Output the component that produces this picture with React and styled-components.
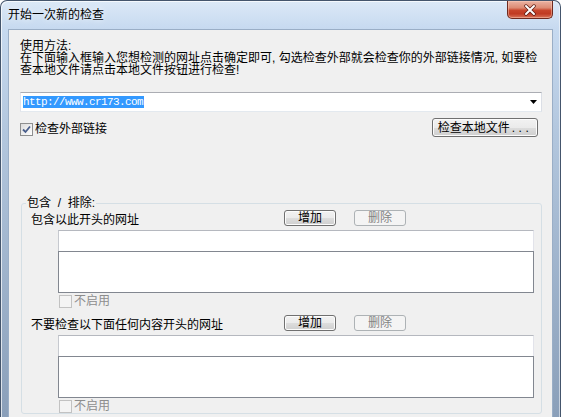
import React from 'react'
import styled, { createGlobalStyle } from 'styled-components';

const GlobalStyle = createGlobalStyle`
  html, body {
    margin: 0;
    padding: 0;
    background: #ffffff;
  }
  body {
    font-family: "Liberation Sans", "Noto Sans CJK SC", sans-serif;
    font-size: 12px;
    color: #000;
  }
`;

const Window = styled.div`
  width: 561px;
  height: 417px;
  box-sizing: border-box;
  border: 1px solid #44556c;
  border-bottom: none;
  border-radius: 7px 7px 0 0;
  background: linear-gradient(#dce9f7 0, #c7daf0 27px, #b3c7de 130px, #8a9fb9 417px);
  box-shadow: inset 1px 1px 0 rgba(255, 255, 255, 0.7), inset -1px 0 0 rgba(255, 255, 255, 0.5);
  padding: 0 7px;
  display: flex;
  flex-direction: column;
  overflow: hidden;
`;

const TitleBar = styled.div`
  height: 28px;
  flex-shrink: 0;
  display: flex;
  justify-content: space-between;
  align-items: flex-start;
`;

const Title = styled.div`
  margin-top: 7px;
  line-height: 14px;
  font-size: 12px;
  text-shadow: 0 0 6px rgba(255, 255, 255, 0.9);
`;

const CloseButton = styled.div`
  width: 46px;
  height: 18px;
  box-sizing: border-box;
  border: 1px solid #6f2a1f;
  border-top: none;
  border-radius: 0 0 5px 5px;
  background: linear-gradient(#eab3a3 0, #dc8b74 40%, #c8452b 55%, #c03a22 75%, #d9745a 100%);
  box-shadow: inset 0 0 0 1px rgba(255, 210, 190, 0.45);
  display: flex;
  align-items: center;
  justify-content: center;
`;

const Client = styled.div`
  flex: 1;
  min-height: 0;
  overflow: hidden;
  background: #f0f0f0;
  border: 1px solid #9aaec6;
  border-bottom: none;
  padding: 10px 10px 0 11px;
  display: flex;
  flex-direction: column;
`;

const Usage = styled.div`
  line-height: 12px;
  white-space: nowrap;
`;

const Combo = styled.div`
  margin-top: 16px;
  height: 20px;
  box-sizing: border-box;
  border: 1px solid #abadb3;
  border-color: #abadb3 #dbdfe6 #e3e9ef #e2e3ea;
  background: #fff;
  display: flex;
  align-items: center;
  padding: 0 4px 0 2px;
`;

const Selected = styled.span`
  background: #3399ff;
  color: #fff;
  font-family: "Liberation Mono", "DejaVu Sans Mono", monospace;
  font-size: 11px;
  letter-spacing: -0.6px;
  line-height: 12px;
  padding-right: 1px;
`;

const Arrow = styled.svg`
  margin-left: auto;
  display: block;
`;

const Check = styled.label`
  display: flex;
  align-items: center;
  gap: 2px;
  line-height: 13px;
  color: ${p => (p.disabled ? '#8d8d8d' : '#000')};
`;

const OptionRow = styled.div`
  margin-top: 6px;
  height: 19px;
  display: flex;
  align-items: center;
  justify-content: space-between;
  padding-right: 4px;

  & > ${Check} {
    margin-top: 4px;
  }
`;

const Box = styled.span`
  width: 13px;
  height: 13px;
  box-sizing: border-box;
  border: 1px solid ${p => (p.disabled ? '#c2c2c2' : '#8e8f8f')};
  background: ${p => (p.disabled ? '#f4f4f4' : 'linear-gradient(135deg, #dcdcdc, #ffffff)')};
  display: flex;
  align-items: center;
  justify-content: center;
`;

const Button = styled.div`
  width: ${p => p.w}px;
  height: ${p => p.h}px;
  box-sizing: border-box;
  border: 1px solid ${p => (p.disabled ? '#adb2b5' : '#707070')};
  border-radius: 3px;
  background: ${p =>
    p.disabled
      ? '#f4f4f4'
      : 'linear-gradient(#f2f2f2 0, #ebebeb 50%, #dddddd 51%, #cfcfcf 100%)'};
  box-shadow: inset 0 0 0 1px ${p => (p.disabled ? '#f4f4f4' : '#fcfcfc')};
  color: ${p => (p.disabled ? '#838383' : '#000')};
  display: flex;
  align-items: center;
  justify-content: center;
  line-height: 12px;
`;

const Dots = styled.span`
  letter-spacing: 3.5px;
  margin-left: 2px;
`;

const Group = styled.fieldset`
  margin: 60px 0 0 1px;
  padding: 1px 7px 0 9px;
  border: 1px solid #d5dfe5;
  border-radius: 3px;
  min-width: 0;
`;

const Legend = styled.legend`
  margin-left: -5px;
  padding: 0 1px;
  line-height: 12px;
  white-space: pre;
`;

const Section = styled.div`
  & + & {
    margin-top: 7px;
  }
`;

const SectionHead = styled.div`
  display: grid;
  grid-template-columns: 235px 52px 52px;
  column-gap: 18px;
  height: 16px;
  align-items: end;
  line-height: 12px;
`;

const Field = styled.div`
  margin: 4px 0 0 27px;
  height: 21px;
  box-sizing: border-box;
  background: #fff;
  border: 1px solid #e2e3ea;
  border-top-color: #b5b8bf;
  border-left-color: #c6c9cf;
  border-bottom: none;
`;

const ListBox = styled.div`
  margin-left: 27px;
  height: 42px;
  box-sizing: border-box;
  background: #fff;
  border: 1px solid #828790;
`;

const SubCheck = styled.div`
  margin: 1px 0 0 28px;
  height: 14px;
  display: flex;
  align-items: center;
`;

const CheckMark = () => (
  <svg width="9" height="9" viewBox="0 0 9 9">
    <path d="M1 4.5 L3.5 7 L8 1.5" fill="none" stroke="#4a5f8c" strokeWidth="1.8" />
  </svg>
);

const UrlSection = ({ label }) => (
  <Section>
    <SectionHead>
      <span>{label}</span>
      <Button w={52} h={16}>增加</Button>
      <Button w={52} h={16} disabled>删除</Button>
    </SectionHead>
    <Field />
    <ListBox />
    <SubCheck>
      <Check disabled>
        <Box disabled />
        不启用
      </Check>
    </SubCheck>
  </Section>
);

const App = () => {
  return (
    <>
      <GlobalStyle />
      <Window>
        <TitleBar>
          <Title>开始一次新的检查</Title>
          <CloseButton>
            <svg width="14" height="12" viewBox="0 0 14 12">
              <path d="M3 2 L11 10 M11 2 L3 10" stroke="#5a1a12" strokeWidth="3.4" strokeLinecap="round" />
              <path d="M3 2 L11 10 M11 2 L3 10" stroke="#ffffff" strokeWidth="2" strokeLinecap="round" />
            </svg>
          </CloseButton>
        </TitleBar>
        <Client>
          <Usage>
            使用方法:
            <br />
            在下面输入框输入您想检测的网址点击确定即可, 勾选检查外部就会检查你的外部链接情况, 如要检
            <br />
            查本地文件请点击本地文件按钮进行检查!
          </Usage>
          <Combo>
            <Selected>http://www.cr173.com</Selected>
            <Arrow width="7" height="4" viewBox="0 0 7 4">
              <path d="M0 0 H7 L3.5 4 Z" fill="#000" />
            </Arrow>
          </Combo>
          <OptionRow>
            <Check>
              <Box>
                <CheckMark />
              </Box>
              检查外部链接
            </Check>
            <Button w={106} h={19}>
              检查本地文件<Dots>...</Dots>
            </Button>
          </OptionRow>
          <Group>
            <Legend>{'包含  /  排除:'}</Legend>
            <UrlSection label="包含以此开头的网址" />
            <UrlSection label="不要检查以下面任何内容开头的网址" />
          </Group>
        </Client>
      </Window>
    </>
  )
}

export default App
